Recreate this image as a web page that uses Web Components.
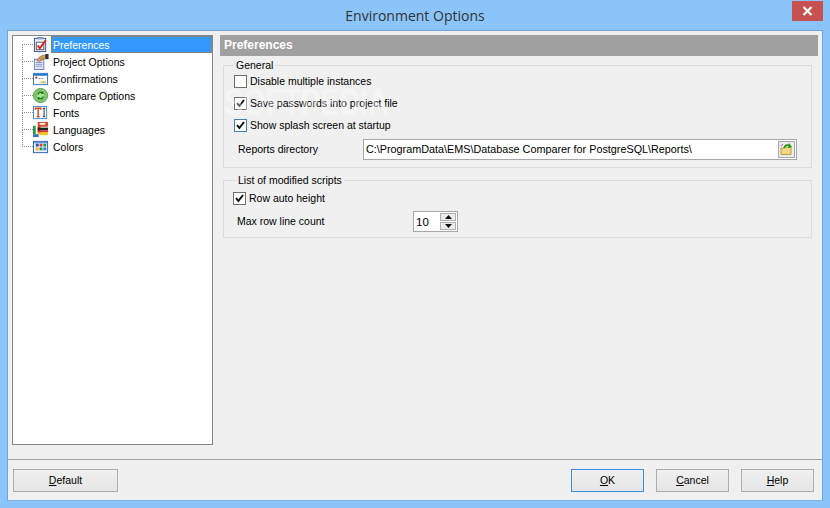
<!DOCTYPE html>
<html>
<head>
<meta charset="utf-8">
<title>Environment Options</title>
<style>
html, body { margin: 0; height: 100%; }
body { background: #8ac4f8; font: 10.5px "Liberation Sans", Arial, sans-serif; color: #000; overflow: hidden; }
</style>
</head>
<body>
<options-window caption="Environment Options">
  <options-tree slot="tree"></options-tree>
  <options-header slot="main">Preferences</options-header>
  <options-group slot="main" legend="General" style="--h:103px;--mt:9px;--pl:10px">
    <options-check>Disable multiple instances</options-check>
    <options-check checked>Save passwords into project file</options-check>
    <options-check checked focus>Show splash screen at startup</options-check>
    <path-field label="Reports directory" value="C:\ProgramData\EMS\Database Comparer for PostgreSQL\Reports\"></path-field>
  </options-group>
  <options-group slot="main" legend="List of modified scripts" style="--h:58px;--mt:12px;--pt:6px;--lx:12px">
    <options-check checked>Row auto height</options-check>
    <spin-field label="Max row line count" value="10"></spin-field>
  </options-group>
  <win-button slot="left" key="D" rest="efault" style="width:105px"></win-button>
  <win-button slot="right" key="O" rest="K" active></win-button>
  <win-button slot="right" key="C" rest="ancel"></win-button>
  <win-button slot="right" key="H" rest="elp"></win-button>
</options-window>

<script>
class OptionsWindow extends HTMLElement {
  constructor() {
    super();
    this.attachShadow({mode: "open"}).innerHTML = `
    <style>
    :host { display: flex; flex-direction: column; height: 508px; box-sizing: border-box; padding: 0 7px 7px 7px; position: relative; }
    .title { height: 30px; flex: none; display: flex; align-items: center; justify-content: center; font: 14px "Open Sans", sans-serif; color: #333; }
    .close { position: absolute; top: 1px; right: 7px; width: 31px; height: 20px; background: #c75050; display: flex; align-items: center; justify-content: center; }
    .client { flex: 1; display: flex; flex-direction: column; background: #f0f0f0; border: 1px solid #6aa5dc; border-bottom-color: #79b2e6; min-height: 0; }
    .top { flex: 1; display: flex; min-height: 0; padding: 4px 4px 0 4px; gap: 7px; }
    .side { width: 201px; height: 410px; flex: none; }
    .main { flex: 1; position: relative; min-width: 0; }
    .mark { position: absolute; left: 4px; top: 47px; font: bold 36px "Liberation Sans", sans-serif; transform: scaleX(.8); transform-origin: left top; color: #fff; opacity: .35; white-space: nowrap; pointer-events: none; }
    .foot { height: 41px; flex: none; margin-top: 14px; border-top: 1px solid #a0a0a0; display: flex; justify-content: space-between; padding: 9px 8px 0 5px; box-sizing: border-box; }
    .right { display: flex; gap: 12px; }
    </style>
    <div class="title">${this.getAttribute("caption")}</div>
    <div class="close"><svg width="11" height="10" viewBox="0 0 11 10"><path d="M1.5 1 L9.5 9 M9.5 1 L1.5 9" stroke="#fff" stroke-width="2.2" fill="none"/></svg></div>
    <div class="client">
      <div class="top">
        <div class="side"><slot name="tree"></slot></div>
        <div class="main"><slot name="main"></slot><div class="mark">SOFTPEDIA</div></div>
      </div>
      <div class="foot"><slot name="left"></slot><div class="right"><slot name="right"></slot></div></div>
    </div>`;
  }
}

const ICONS = {
  prefs: `<rect x="1.5" y="1.5" width="12" height="14" fill="#eef2fb" stroke="#33508c"/><rect x="4" y="0" width="7" height="2.5" fill="#8a9ab8"/><rect x="3.5" y="5.5" width="8" height="8" fill="#fff" stroke="#555"/><path d="M5 9 L7.2 12 L13.5 3.5" stroke="#e0201c" stroke-width="2" fill="none"/>`,
  project: `<rect x="1.5" y="5.5" width="10" height="11" fill="#dfe6fa" stroke="#6d7fb8"/><path d="M3 9h7M3 11h7M3 13h7" stroke="#8a9ac8"/><path d="M4 7 L7 3 L11 1 L13 1.5 L13.5 4.5 L10 6 L7 8 Z" fill="#d9a060" stroke="#8a5c2c" stroke-width=".6"/><path d="M7 4 L9 7 M9 3 L11 5.5" stroke="#8a5c2c" stroke-width=".6"/><rect x="13" y="0" width="3.5" height="5.5" fill="#333"/>`,
  confirm: `<rect x="0.5" y="2.5" width="15" height="12" fill="#fff" stroke="#2a78c8"/><rect x="1" y="3" width="14" height="2" fill="#1f74d0"/><rect x="2.5" y="6" width="2" height="2" fill="#e01818"/><path d="M6 8h2M9 8h2" stroke="#888"/><path d="M8 12h6" stroke="#d8c050" stroke-width="2"/>`,
  compare: `<circle cx="8" cy="8" r="7.5" fill="#8ccf78" stroke="#4d9a44"/><circle cx="8" cy="8" r="4.8" fill="#a8e090" stroke="#5aa850"/><path d="M5 7 A3.4 3.4 0 0 1 10.5 5.5 M11 9 A3.4 3.4 0 0 1 5.5 10.5" stroke="#1d7a20" stroke-width="1.4" fill="none"/><path d="M10 3.5 L11.5 6.5 L8.5 6 Z M6 12.5 L4.5 9.5 L7.5 10 Z" fill="#1d7a20"/>`,
  fonts: `<rect x="0.5" y="1.5" width="14" height="13" fill="#fff" stroke="#3a8ad8"/><path d="M2.5 5 V3.5 H8.5 V5 M5.5 3.5 V12.5 M4 12.5 H7" stroke="#e0401c" stroke-width="1.5" fill="none"/><path d="M10.5 3.5h2.5M11.8 3.5v9M10.5 12.5h2.5" stroke="#222"/>`,
  langs: `<rect x="5" y="0" width="11" height="5" fill="#d84a28"/><rect x="7" y="1" width="6" height="2" fill="#eef"/><rect x="0" y="4" width="3" height="9" fill="#18a040"/><rect x="3" y="4" width="2" height="9" fill="#fff"/><rect x="5" y="4" width="3" height="9" fill="#e03830"/><rect x="5" y="6" width="11" height="3" fill="#222"/><rect x="5" y="9" width="11" height="2" fill="#d83020"/><rect x="5" y="11" width="11" height="3" fill="#f0c820"/><rect x="0" y="13" width="6" height="3" fill="#3a70c8"/>`,
  colors: `<rect x="0.5" y="2.5" width="15" height="12" fill="#e8f0ff" stroke="#2a62b8"/><rect x="1" y="3" width="14" height="1.5" fill="#5a94dc"/><rect x="3" y="5" width="3" height="3" fill="#2050c0"/><rect x="7" y="5" width="3" height="3" fill="#e04020"/><rect x="11" y="5" width="3" height="3" fill="#2a9a30"/><rect x="3" y="9" width="3" height="3" fill="#f0b020"/><rect x="7" y="9" width="3" height="3" fill="#2a9a30"/><rect x="11" y="9" width="3" height="3" fill="#3080e0"/>`
};

class OptionsTree extends HTMLElement {
  constructor() {
    super();
    const items = [["prefs", "Preferences"], ["project", "Project Options"], ["confirm", "Confirmations"],
      ["compare", "Compare Options"], ["fonts", "Fonts"], ["langs", "Languages"], ["colors", "Colors"]];
    this.attachShadow({mode: "open"}).innerHTML = `
    <style>
    :host { display: block; height: 100%; box-sizing: border-box; background: #fff; border: 1px solid #828790; position: relative; }
    .row { height: 17px; display: flex; align-items: center; position: relative; padding-left: 9px; }
    .row::before { content: ""; width: 11px; border-top: 1px dotted #909090; flex: none; }
    .row::after { content: ""; position: absolute; left: 9px; top: -8px; height: 17px; border-left: 1px dotted #909090; }
    .row:first-of-type::after { display: none; }
    svg { width: 16px; height: 16px; flex: none; margin-right: 2px; }
    span { flex: none; padding: 1px 2px 0; line-height: 16px; height: 17px; box-sizing: border-box; }
    .sel { flex: 1; background: #3399ff; color: #fff; border: 1px dotted #e06a00; padding: 1px 1px 0; line-height: 14px; }
    </style>
    ${items.map(([ic, t], i) => `<div class="row"><svg viewBox="0 0 17 17">${ICONS[ic]}</svg><span class="${i ? "" : "sel"}">${t}</span></div>`).join("")}`;
  }
}

class OptionsHeader extends HTMLElement {
  constructor() {
    super();
    this.attachShadow({mode: "open"}).innerHTML = `
    <style>
    :host { display: block; height: 21px; background: #a0a0a0; color: #fff; font: bold 12px/21px "Liberation Sans", sans-serif; padding-left: 4px; }
    </style><slot></slot>`;
  }
}

class OptionsGroup extends HTMLElement {
  constructor() {
    super();
    this.attachShadow({mode: "open"}).innerHTML = `
    <style>
    :host { display: block; margin: var(--mt, 0) 6px 0 3px; height: var(--h); border: 1px solid #dcdcdc; box-sizing: border-box; position: relative; }
    .legend { position: absolute; left: var(--lx, 10px); top: -7px; background: #f0f0f0; padding: 0 2px; line-height: 13px; }
    .body { display: flex; flex-direction: column; padding: var(--pt, 4px) 0 0 var(--pl, 9px); }
    </style>
    <div class="legend">${this.getAttribute("legend")}</div>
    <div class="body"><slot></slot></div>`;
  }
}

class OptionsCheck extends HTMLElement {
  constructor() {
    super();
    const on = this.hasAttribute("checked");
    const focus = this.hasAttribute("focus");
    this.attachShadow({mode: "open"}).innerHTML = `
    <style>
    :host { display: flex; align-items: center; height: 22px; gap: 3px; }
    .box { width: 13px; height: 13px; flex: none; display: block; }
    </style>
    <svg class="box" viewBox="0 0 13 13"><rect x=".5" y=".5" width="12" height="12" fill="#fff" stroke="${focus ? "#3c7fb1" : "#707070"}"/>${on ? `<path d="M3 6.2 L5.4 9 L10 3" stroke="#111" stroke-width="2" fill="none"/>` : ""}</svg>
    <span><slot></slot></span>`;
  }
}

class PathField extends HTMLElement {
  constructor() {
    super();
    this.attachShadow({mode: "open"}).innerHTML = `
    <style>
    :host { display: flex; align-items: center; height: 21px; margin-top: 3px; padding-left: 4px; }
    label { width: 125px; flex: none; padding-bottom: 2px; }
    .edit { width: 434px; height: 21px; box-sizing: border-box; border: 1px solid #a8a8a8; background: #fff; display: flex; align-items: center; justify-content: space-between; padding-left: 2px; font-size: 10.8px; }
    .edit span { padding-bottom: 2px; }
    .btn { width: 17px; height: 17px; margin-right: 1px; box-sizing: border-box; border: 1px solid #a8a8a8; background: #ececec; display: flex; align-items: center; justify-content: center; }
    svg { display: block; }
    </style>
    <label>${this.getAttribute("label")}</label>
    <div class="edit"><span>${this.getAttribute("value")}</span>
      <div class="btn"><svg width="13" height="13" viewBox="0 0 13 13"><path d="M1 5 H5 L6 4 H11 V11.5 H1 Z" fill="#f4d77e" stroke="#b08a30" stroke-width=".8"/><path d="M4 5 C5 2 8 1 10 3" stroke="#1f9a10" stroke-width="1.6" fill="none"/><path d="M9 0 L12 4 L8 5 Z" fill="#1f9a10"/><path d="M1 3 L3 1" stroke="#e030d0"/></svg></div>
    </div>`;
  }
}

class SpinField extends HTMLElement {
  constructor() {
    super();
    this.attachShadow({mode: "open"}).innerHTML = `
    <style>
    :host { display: flex; align-items: center; height: 21px; margin-top: 2px; padding-left: 4px; }
    label { width: 176px; flex: none; padding-bottom: 2px; }
    .edit { width: 45px; height: 21px; box-sizing: border-box; border: 1px solid #a8a8a8; background: #fff; display: flex; align-items: center; justify-content: space-between; padding-left: 2px; font-size: 11.5px; }
    .arrows { display: flex; flex-direction: column; gap: 1px; margin-right: 1px; }
    .arrows div { width: 16px; height: 8px; box-sizing: border-box; border: 1px solid #b0b0b0; background: #ececec; display: flex; align-items: center; justify-content: center; }
    svg { display: block; }
    </style>
    <label>${this.getAttribute("label")}</label>
    <div class="edit"><span>${this.getAttribute("value")}</span>
      <div class="arrows">
        <div><svg width="7" height="4"><path d="M3.5 0 L7 4 H0 Z" fill="#111"/></svg></div>
        <div><svg width="7" height="4"><path d="M0 0 H7 L3.5 4 Z" fill="#111"/></svg></div>
      </div>
    </div>`;
  }
}

class WinButton extends HTMLElement {
  constructor() {
    super();
    const active = this.hasAttribute("active");
    this.attachShadow({mode: "open"}).innerHTML = `
    <style>
    :host { display: flex; width: 73px; height: 23px; box-sizing: border-box; align-items: center; justify-content: center; padding-bottom: 1px;
      border: 1px solid ${active ? "#3c8fe0" : "#acacac"}; background: linear-gradient(#f0f0f0, #e5e5e5); }
    u { text-decoration: underline; }
    </style>
    <span><u>${this.getAttribute("key")}</u>${this.getAttribute("rest")}</span>`;
  }
}

customElements.define("options-window", OptionsWindow);
customElements.define("options-tree", OptionsTree);
customElements.define("options-header", OptionsHeader);
customElements.define("options-group", OptionsGroup);
customElements.define("options-check", OptionsCheck);
customElements.define("path-field", PathField);
customElements.define("spin-field", SpinField);
customElements.define("win-button", WinButton);
</script>
</body>
</html>
